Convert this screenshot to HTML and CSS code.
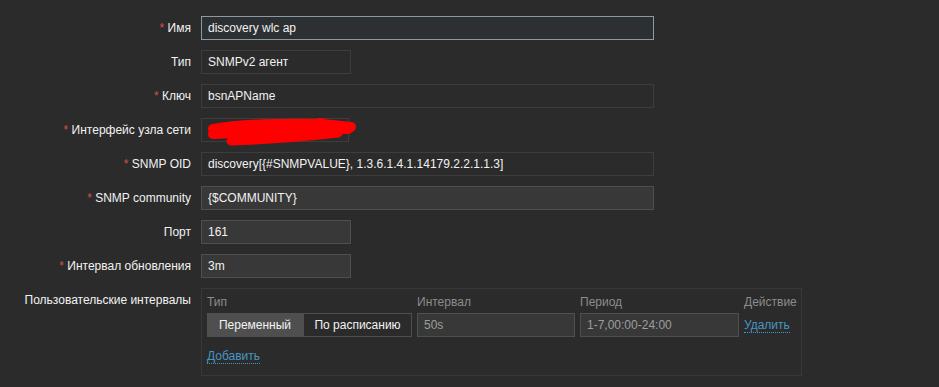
FILE: index.html
```html
<!DOCTYPE html>
<html lang="ru">
<head>
  <meta charset="UTF-8" />
  <title>Правило обнаружения</title>
  <link rel="stylesheet" href="styles.css">
</head>
<body>
  <div class="form">
    <label class="lbl"><span class="req">*</span> Имя</label>
    <div><div class="field wide focus">discovery wlc ap</div></div>

    <label class="lbl">Тип</label>
    <div><div class="field narrow ro">SNMPv2 агент</div></div>

    <label class="lbl"><span class="req">*</span> Ключ</label>
    <div><div class="field wide ro">bsnAPName</div></div>

    <label class="lbl"><span class="req">*</span> Интерфейс узла сети</label>
    <div>
      <div class="masked">
        <div class="field iface ro">&nbsp;</div>
        <svg class="scribble" width="160" height="30" viewBox="0 0 160 30">
          <path d="M10 11 C40 6 80 5 120 6 L148 9" stroke="#ff0000" stroke-width="10" fill="none" stroke-linecap="round"/>
          <path d="M10 16 C50 14 100 12 145 11" stroke="#ff0000" stroke-width="10" fill="none" stroke-linecap="round"/>
          <path d="M28 23 C60 22 100 19 135 15" stroke="#ff0000" stroke-width="9" fill="none" stroke-linecap="round"/>
          <path d="M112 5 L118 2" stroke="#ff0000" stroke-width="6" fill="none" stroke-linecap="round"/>
        </svg>
      </div>
    </div>

    <label class="lbl"><span class="req">*</span> SNMP OID</label>
    <div><div class="field wide ro">discovery[{#SNMPVALUE}, 1.3.6.1.4.1.14179.2.2.1.1.3]</div></div>

    <label class="lbl"><span class="req">*</span> SNMP community</label>
    <div><div class="field wide">{$COMMUNITY}</div></div>

    <label class="lbl">Порт</label>
    <div><div class="field narrow">161</div></div>

    <label class="lbl"><span class="req">*</span> Интервал обновления</label>
    <div><div class="field narrow">3m</div></div>

    <label class="lbl">Пользовательские интервалы</label>
    <div>
      <div class="intervals">
        <div class="iv-grid">
          <div class="th">Тип</div>
          <div class="th">Интервал</div>
          <div class="th">Период</div>
          <div class="th">Действие</div>

          <div class="seg">
            <span class="seg-btn on">Переменный</span>
            <span class="seg-btn">По расписанию</span>
          </div>
          <div class="field dim">50s</div>
          <div class="field dim">1-7,00:00-24:00</div>
          <div><a class="link" href="#">Удалить</a></div>
        </div>
        <a class="link add" href="#">Добавить</a>
      </div>
    </div>
  </div>
</body>
</html>
```

FILE: styles.css
```css
body { margin: 0; background: #2b2b2b; color: #f2f2f2; font-family: "Liberation Sans", Arial, sans-serif; font-size: 12px; }
.form { display: grid; grid-template-columns: 183px auto; column-gap: 10px; row-gap: 10px; padding: 16px 0 0 8px; }
.lbl { text-align: right; line-height: 24px; white-space: nowrap; }
.req { color: #d64e4e; }
.field { box-sizing: border-box; height: 24px; line-height: 22px; padding: 0 6px; border: 1px solid #4f4f4f; background: #383838; white-space: nowrap; overflow: hidden; }
.field.ro { background: #2b2b2b; border-color: #3d3d3d; }
.field.focus { background: #2d3033; border-color: #8a9ba4; }
.field.dim { color: #9d9d9d; }
.wide { width: 453px; }
.narrow { width: 150px; }
.iface { width: 148px; border-color: #4a5256; }
.masked { position: relative; width: 160px; }
.scribble { position: absolute; left: 2px; top: 0; }
.intervals { box-sizing: border-box; width: 601px; height: 88px; border: 1px solid #383838; padding: 4px 5px 0; }
.iv-grid { display: grid; grid-template-columns: 205px 158px 159px auto; column-gap: 5px; row-gap: 2px; align-items: center; }
.th { color: #8c8c8c; line-height: 18px; }
.seg { display: flex; height: 24px; }
.seg-btn { box-sizing: border-box; height: 24px; line-height: 22px; padding: 0 8px; border: 1px solid #4f4f4f; background: #2b2b2b; }
.seg-btn.on { background: #4f4f4f; width: 96px; text-align: center; }
.seg-btn:last-child { flex: 1; text-align: center; }
.link { color: #4796c4; text-decoration: none; border-bottom: 1px dotted #4796c4; }
.add { display: inline-block; margin-top: 12px; line-height: 14px; }
```
